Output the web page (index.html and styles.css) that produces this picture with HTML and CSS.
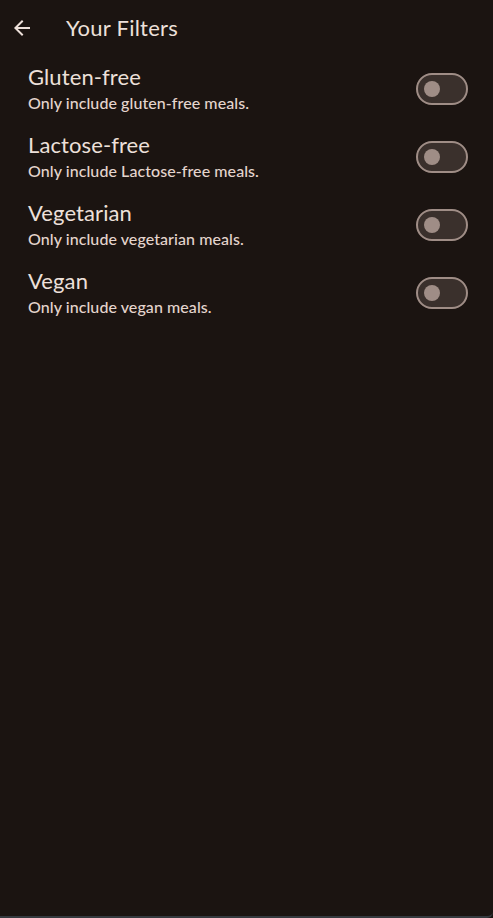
FILE: index.html
```html
<!DOCTYPE html>
<html>
<head>
<meta charset="utf-8">
<link rel="stylesheet" href="styles.css">
</head>
<body>
<div class="screen">
  <header class="appbar">
    <button class="back" aria-label="Back">
      <svg width="24" height="24" viewBox="0 0 24 24"><path d="M20 11H7.83l5.59-5.59L12 4l-8 8 8 8 1.41-1.41L7.83 13H20v-2z" fill="currentColor"/></svg>
    </button>
    <h1 class="title">Your Filters</h1>
  </header>
  <main class="list">
    <div class="tile">
      <div class="text">
        <div class="t">Gluten-free</div>
        <div class="s">Only include gluten-free meals.</div>
      </div>
      <div class="switch"><span class="thumb"></span></div>
    </div>
    <div class="tile">
      <div class="text">
        <div class="t">Lactose-free</div>
        <div class="s">Only include Lactose-free meals.</div>
      </div>
      <div class="switch"><span class="thumb"></span></div>
    </div>
    <div class="tile">
      <div class="text">
        <div class="t">Vegetarian</div>
        <div class="s">Only include vegetarian meals.</div>
      </div>
      <div class="switch"><span class="thumb"></span></div>
    </div>
    <div class="tile">
      <div class="text">
        <div class="t">Vegan</div>
        <div class="s">Only include vegan meals.</div>
      </div>
      <div class="switch"><span class="thumb"></span></div>
    </div>
  </main>
</div>
</body>
</html>
```
FILE: styles.css
```css
html, body {
  margin: 0;
  padding: 0;
  background: #1b1411;
}
body {
  font-family: Lato, "Noto Sans", sans-serif;
  color: #ede0da;
}
.screen {
  width: 493px;
  height: 918px;
  box-sizing: border-box;
  border-bottom: 2px solid #353a3f;
  border-bottom-right-radius: 6px;
  display: flex;
  flex-direction: column;
}
.appbar {
  height: 55px;
  display: flex;
  align-items: center;
}
.back {
  background: none;
  border: 0;
  padding: 0;
  margin-left: 10px;
  width: 24px;
  height: 24px;
  color: #ede0da;
  display: flex;
}
.title {
  margin: 0 0 1px 32px;
  font-size: 22px;
  letter-spacing: 0.25px;
  font-weight: 400;
  color: #ede0da;
}
.list {
  display: flex;
  flex-direction: column;
}
.tile {
  height: 68px;
  display: flex;
  align-items: center;
  padding: 0 25px 0 28px;
}
.text {
  flex: 1;
}
.t {
  font-size: 22px;
  line-height: 28px;
  letter-spacing: 0.1px;
  color: #ede0da;
}
.s {
  font-size: 16px;
  font-weight: 500;
  line-height: 24px;
  letter-spacing: 0.07px;
  color: #e4d4cd;
}
.switch {
  height: 28px;
  border: 2px solid #9f8d86;
  border-radius: 16px;
  background: #3a302c;
  display: flex;
  align-items: center;
  padding-left: 6px;
  box-sizing: content-box;
  width: 42px;
}
.thumb {
  width: 16px;
  height: 16px;
  border-radius: 50%;
  background: #9f8d86;
}
```
